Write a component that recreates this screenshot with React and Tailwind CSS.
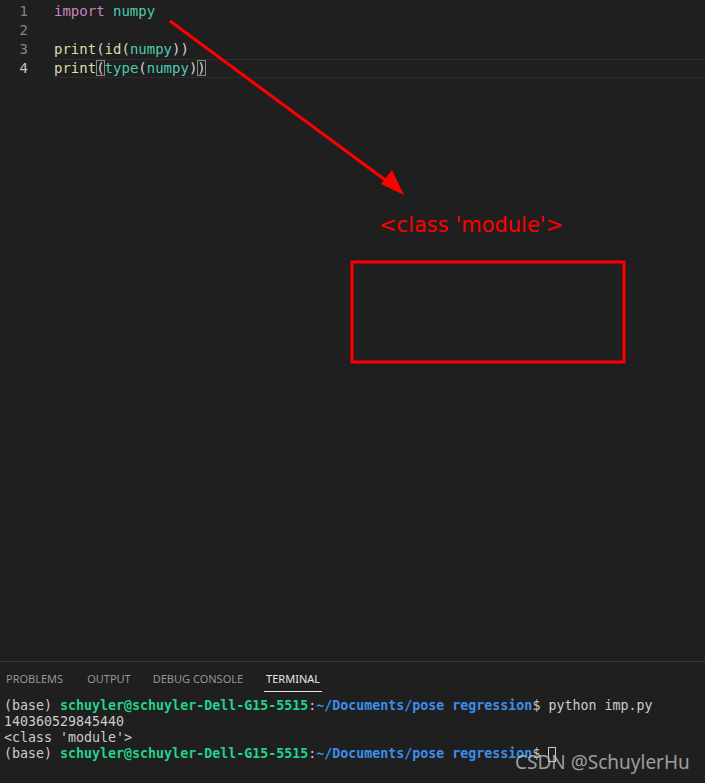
import React from "react";

const mono = { fontFamily: '"DejaVu Sans Mono", "Liberation Mono", monospace' };

function Paren({ ch, boxed }) {
  return (
    <span className={boxed ? "outline outline-1 outline-[#8a8a8a] -outline-offset-1 text-[#d4d4d4]" : "text-[#d4d4d4]"}>
      {ch}
    </span>
  );
}

const lines = [
  [
    <span key="a" className="text-[#c586c0]">import</span>,
    " ",
    <span key="b" className="text-[#4ec9b0]">numpy</span>,
  ],
  [],
  [
    <span key="a" className="text-[#dcdcaa]">print</span>,
    <Paren key="p1" ch="(" />,
    <span key="b" className="text-[#dcdcaa]">id</span>,
    <Paren key="p2" ch="(" />,
    <span key="c" className="text-[#4ec9b0]">numpy</span>,
    <Paren key="p3" ch="))" />,
  ],
  [
    <span key="a" className="text-[#dcdcaa]">print</span>,
    <Paren key="p1" ch="(" boxed />,
    <span key="b" className="text-[#4ec9b0]">type</span>,
    <Paren key="p2" ch="(" />,
    <span key="c" className="text-[#4ec9b0]">numpy</span>,
    <Paren key="p3" ch=")" />,
    <Paren key="p4" ch=")" boxed />,
  ],
];

function Prompt() {
  return (
    <>
      <span>(base) </span>
      <span className="font-bold text-[#23d18b]">schuyler@schuyler-Dell-G15-5515</span>
      <span>:</span>
      <span className="font-bold text-[#3b8eea]">~/Documents/pose regression</span>
      <span>$ </span>
    </>
  );
}

export default function App() {
  return (
    <div className="relative flex h-[783px] w-[705px] flex-col overflow-hidden bg-[#1f1f1f]">
      {/* editor */}
      <div className="flex-1 pt-[2px] text-[14px] leading-[19px]" style={mono}>
        {lines.map((parts, i) => (
          <div key={i} className="flex h-[19px]">
            <div
              className={
                "w-[28px] shrink-0 text-right " +
                (i === 3 ? "text-[#c6c6c6]" : "text-[#858585]")
              }
            >
              {i + 1}
            </div>
            <div
              className={
                "ml-[26px] flex-1 whitespace-pre " +
                (i === 3 ? "border-y border-[#2c2c2c]" : "")
              }
            >
              <span className={i === 3 ? "relative -top-px" : ""}>{parts}</span>
            </div>
          </div>
        ))}
      </div>

      {/* panel */}
      <div className="h-[122px] shrink-0 border-t border-[#3a3a3a]">
        <div
          className="flex h-[33px] items-center pl-[6px] pt-[2px] text-[11px] text-[#969696]"
          style={{ fontFamily: '"Noto Sans", "Open Sans", sans-serif' }}
        >
          <span>PROBLEMS</span>
          <span className="ml-[24px]">OUTPUT</span>
          <span className="ml-[22px]">DEBUG CONSOLE</span>
          <span className="relative ml-[23px] text-[#e7e7e7]">
            TERMINAL
            <span className="absolute -left-[2px] -right-[2px] top-[20px] h-px bg-[#e7e7e7]" />
          </span>
        </div>
        <div
          className="whitespace-pre pl-[4px] pt-[3px] text-[13.3px] leading-[16px] text-[#cccccc]"
          style={mono}
        >
          <div>
            <Prompt />python imp.py
          </div>
          <div>140360529845440</div>
          <div>&lt;class 'module'&gt;</div>
          <div className="flex items-center">
            <Prompt />
            <span className="inline-block h-[15px] w-[8px] border border-[#cccccc]" />
          </div>
        </div>
      </div>

      {/* annotations */}
      <svg className="pointer-events-none absolute left-0 top-0" width="705" height="400">
        <line x1="170" y1="21" x2="388" y2="182" stroke="#ff0000" strokeWidth="3" />
        <polygon points="404,195 381,184 392,170" fill="#ff0000" />
        <rect x="352" y="262" width="272" height="100" fill="none" stroke="#ff0000" strokeWidth="3" />
      </svg>
      <div
        className="absolute left-[379px] top-[211px] text-[21px] leading-[28px] text-[#ff0000]"
        style={{ fontFamily: '"DejaVu Sans", sans-serif' }}
      >
        &lt;class 'module'&gt;
      </div>
      <div
        className="absolute left-[515px] top-[749px] text-[19px] leading-[26px] text-[#c0c0c0]/80"
        style={{ fontFamily: '"Noto Sans", "Open Sans", sans-serif' }}
      >
        CSDN @SchuylerHu
      </div>
    </div>
  );
}
